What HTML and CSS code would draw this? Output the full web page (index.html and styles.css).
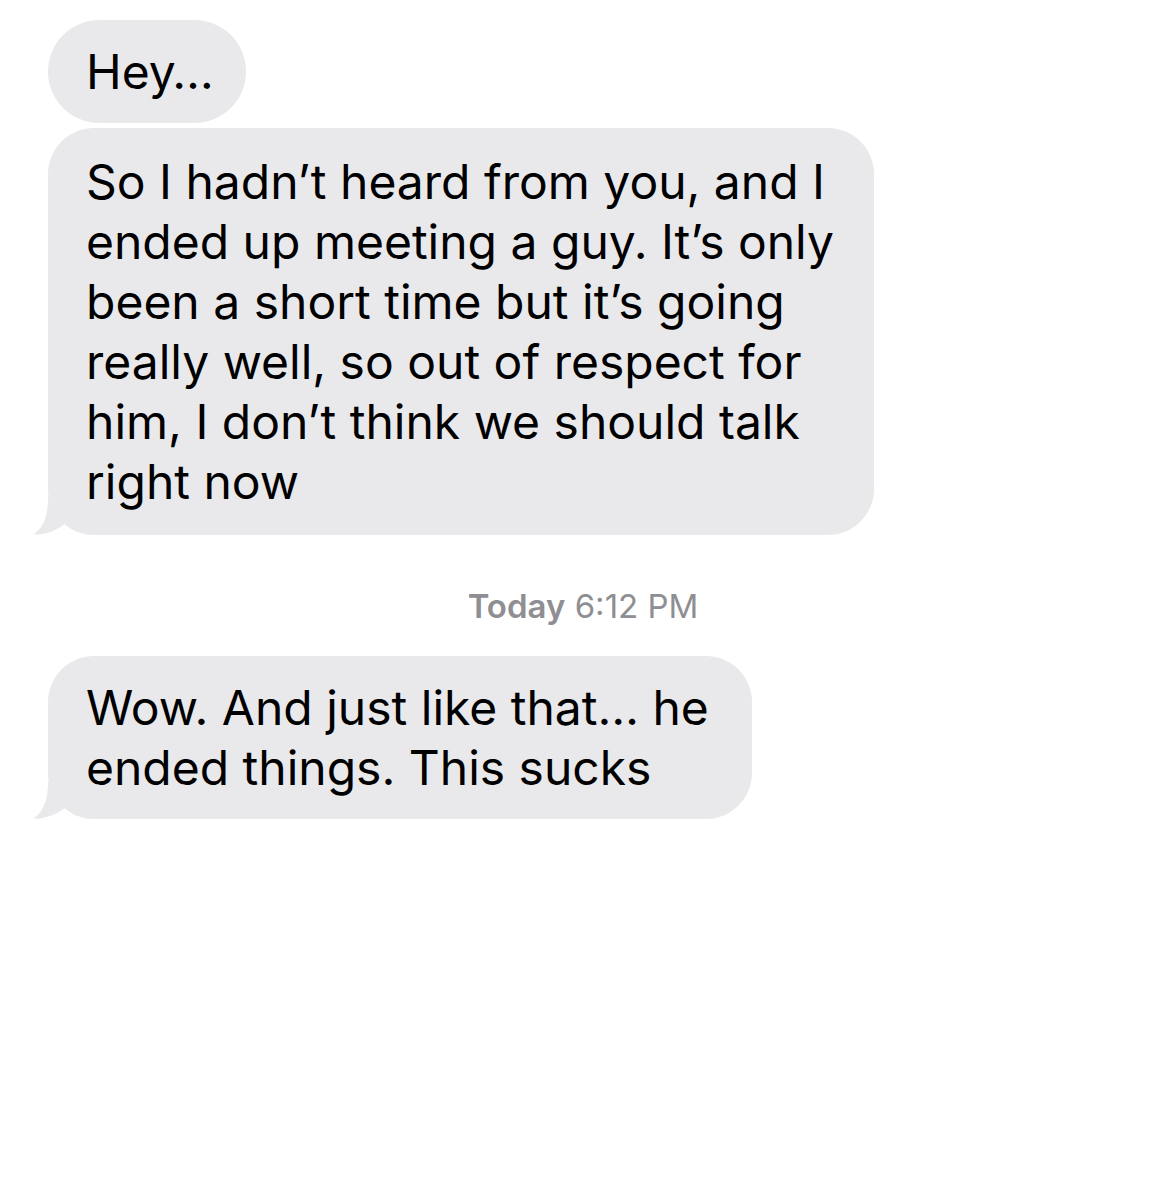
FILE: index.html
```html
<!DOCTYPE html>
<html>
<head>
<meta charset="utf-8">
<link rel="stylesheet" href="styles.css">
</head>
<body>
<div class="thread">
  <div class="bubble b-hey">Hey…</div>
  <div class="bubble b-long tail">So I hadn’t heard from you, and I<br>ended up meeting a guy. It’s only<br>been a short time but it’s going<br>really well, so out of respect for<br>him, I don’t think we should talk<br>right now
    <svg class="tail-svg" width="50" height="40" viewBox="0 0 50 40"><path d="M15,2 C15,24 9,34 0,39.5 C11,40.5 23,36 33,28 L33,0 Z" fill="#e9e9eb"/></svg>
  </div>
  <div class="stamp"><b>Today</b> 6:12 PM</div>
  <div class="bubble b-wow tail">Wow. And just like that… he<br>ended things. This sucks
    <svg class="tail-svg" width="50" height="40" viewBox="0 0 50 40"><path d="M15,2 C15,24 9,34 0,39.5 C11,40.5 23,36 33,28 L33,0 Z" fill="#e9e9eb"/></svg>
  </div>
</div>
</body>
</html>
```
FILE: styles.css
```css
html, body {
  margin: 0;
  padding: 0;
  background: #ffffff;
}
.thread {
  display: flex;
  flex-direction: column;
  align-items: flex-start;
  gap: 5px;
  padding: 20px 0 0 48px;
  font-family: Inter, "Liberation Sans", sans-serif;
}
.bubble {
  position: relative;
  box-sizing: border-box;
  background: #e9e9eb;
  color: #000;
  font-size: 48px;
  line-height: 60px;
  padding: 22px 0 21px 38px;
  border-radius: 46px;
  white-space: nowrap;
}
.b-hey { width: 198px; border-radius: 52px; }
.b-long { width: 826px; padding-top: 24px; padding-bottom: 23px; }
.b-wow { width: 704px; }
.tail-svg {
  position: absolute;
  left: -15px;
  bottom: 0;
  display: block;
}
.stamp {
  align-self: stretch;
  margin-left: -48px;
  margin-top: 46px;
  margin-bottom: 25px;
  text-align: center;
  color: #8e8e93;
  font-size: 33px;
  line-height: 40px;
}
.stamp b { font-weight: 600; }
```
